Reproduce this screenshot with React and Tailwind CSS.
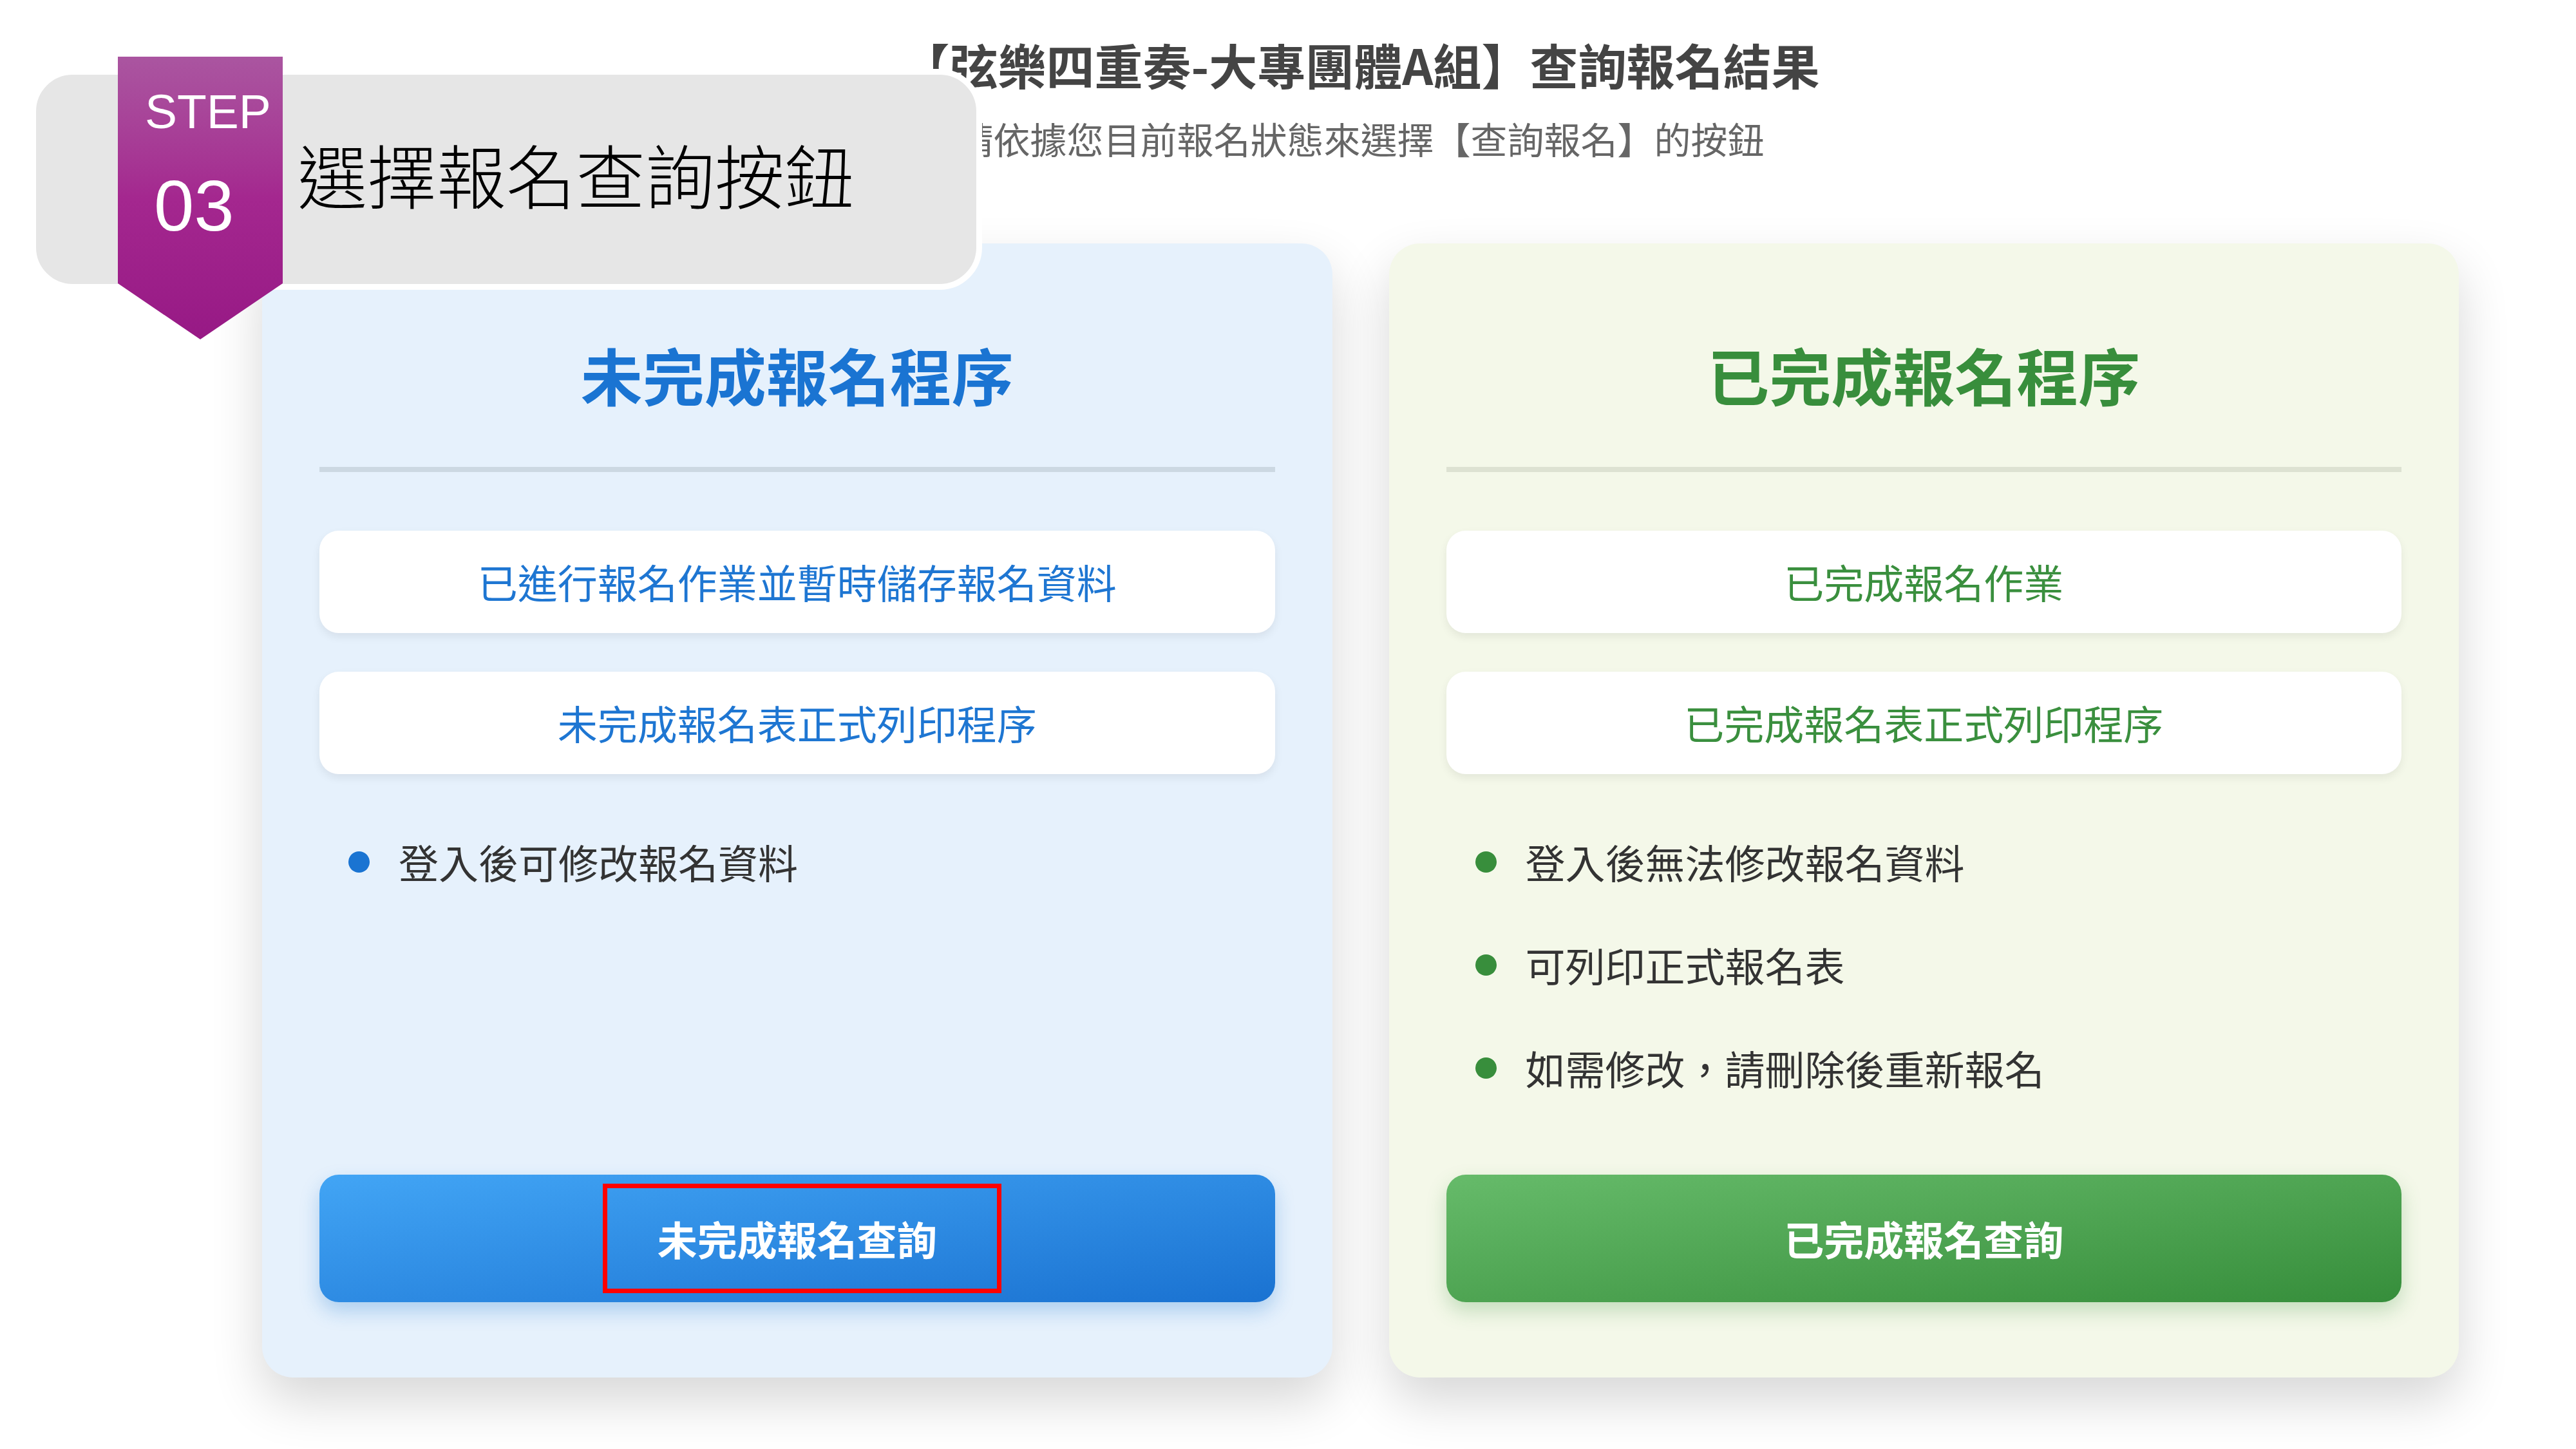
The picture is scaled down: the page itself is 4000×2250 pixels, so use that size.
import React from 'react'

const cjk = "font-['Noto_Sans_CJK_TC',sans-serif]"

const Card = ({ tone, title, boxes, bullets, action, marked }) => {
  const blue = tone === 'blue'
  return (
    <div
      className={`flex flex-col rounded-[48px] px-[89px] pt-[155px] pb-[117px] shadow-[0_36px_80px_rgba(0,0,0,0.16)] ${
        blue ? 'bg-[#e6f1fc]' : 'bg-[#f4f8e9]'
      }`}
    >
      <h2
        className={`text-center text-[96px] leading-none font-bold ${
          blue ? 'text-[#1a74d2]' : 'text-[#388e3c]'
        }`}
      >
        {title}
      </h2>
      <div className={`mt-[96px] h-[8px] ${blue ? 'bg-[#ccd8e2]' : 'bg-[#dde2d2]'}`} />

      <div className="mt-[91px] flex flex-col gap-[60px]">
        {boxes.map(b => (
          <div
            key={b}
            className={`flex h-[159px] items-center justify-center rounded-[30px] bg-white text-[62px] shadow-[0_6px_14px_rgba(0,0,0,0.07)] ${
              blue ? 'text-[#1e76d2]' : 'text-[#3a8f3e]'
            }`}
          >
            {b}
          </div>
        ))}
      </div>

      <ul className="mt-[86px] mb-[116px] flex flex-col gap-[60px]">
        {bullets.map(t => (
          <li key={t} className="flex h-[100px] items-center pl-[45px]">
            <span className={`h-[33px] w-[33px] rounded-full ${blue ? 'bg-[#1a74d2]' : 'bg-[#388e3c]'}`} />
            <span className="ml-[45px] text-[62px] text-[#333333]">{t}</span>
          </li>
        ))}
      </ul>

      <button
        className={`mt-auto flex h-[198px] items-center justify-center rounded-[30px] text-[62px] font-bold text-white ${
          blue
            ? 'bg-linear-to-br from-[#42a5f5] to-[#1a72d1] shadow-[0_14px_30px_rgba(25,118,210,0.28)]'
            : 'bg-linear-to-br from-[#66bb6a] to-[#368e3b] shadow-[0_14px_30px_rgba(56,142,60,0.25)]'
        }`}
      >
        {marked ? (
          <span className="ml-[16px] flex h-[170px] w-[619px] items-center justify-center border-[7px] border-[#ff0000] pr-[16px]">
            {action}
          </span>
        ) : (
          action
        )}
      </button>
    </div>
  )
}

export default function App() {
  return (
    <div className={`relative h-[2250px] w-[4000px] overflow-hidden bg-white ${cjk}`}>
      <div className="pl-[407px] pr-[182px] pt-[62px]">
        <h1 className="text-center text-[75px] leading-none font-bold text-[#444444]">
          【弦樂四重奏-大專團體A組】查詢報名結果
        </h1>
        <p className="mt-[49px] text-center text-[57px] leading-none text-[#666666]">
          請依據您目前報名狀態來選擇【查詢報名】的按鈕
        </p>

        <div className="mt-[135px] grid grid-cols-2 gap-[88px]">
          <Card
            tone="blue"
            title="未完成報名程序"
            boxes={['已進行報名作業並暫時儲存報名資料', '未完成報名表正式列印程序']}
            bullets={['登入後可修改報名資料']}
            action="未完成報名查詢"
            marked
          />
          <Card
            tone="green"
            title="已完成報名程序"
            boxes={['已完成報名作業', '已完成報名表正式列印程序']}
            bullets={['登入後無法修改報名資料', '可列印正式報名表', '如需修改，請刪除後重新報名']}
            action="已完成報名查詢"
          />
        </div>
      </div>

      {/* step annotation overlay */}
      <div className="absolute left-[47px] top-[107px] flex h-[343px] w-[1478px] items-center rounded-[66px] border-[9px] border-white bg-[#e6e6e6] pb-[20px] pl-[406px]">
        <span className="text-[108px] leading-none font-light text-black">選擇報名查詢按鈕</span>
      </div>
      <div className="absolute left-[183px] top-[88px] h-[439px] w-[256px] bg-linear-to-b from-[#aa55a0] via-[#a4278f] to-[#971985] [clip-path:polygon(0_0,100%_0,100%_80.2%,50%_100%,0_80.2%)]">
        <span className="absolute left-[42px] top-[48px] font-['Liberation_Sans',sans-serif] text-[75px] leading-none text-white">
          STEP
        </span>
        <span className="absolute left-[56px] top-[176px] font-['Liberation_Sans',sans-serif] text-[112px] leading-none text-white">
          03
        </span>
      </div>
    </div>
  )
}
